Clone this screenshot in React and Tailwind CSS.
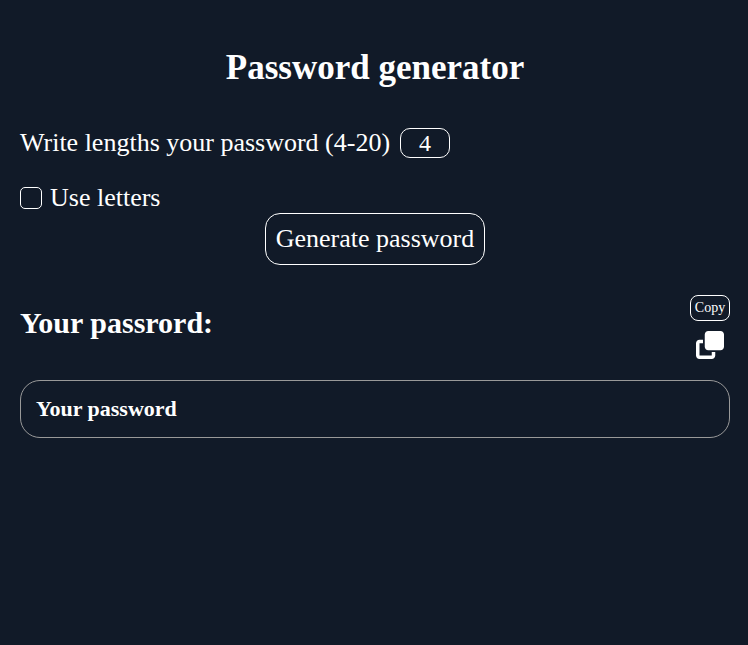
export default function App() {
  return (
    <div className="min-h-[645px] overflow-hidden bg-[#111a28] px-5 font-['Liberation_Serif','Times_New_Roman',serif] text-white">
      <h1 className="mt-[47px] pl-0.5 text-center text-[35px] leading-[42px] font-bold">Password generator</h1>
      <div className="mt-[39px] flex h-[30px] items-center text-[26px]">
        <span className="pb-0.5">Write lengths your password (4-20)</span>
        <div className="ml-[10px] h-[30px] w-[50px] rounded-[10px] border border-white text-center text-[24px] leading-7">4</div>
      </div>
      <label className="mt-[25px] flex h-[30px] items-center text-[26px]">
        <span className="mr-2 size-[22px] rounded-[5px] border border-white" />
        <span className="pb-0.5">Use letters</span>
      </label>
      <div className="ml-[245px] w-[220px]">
        <button className="h-[52px] w-[220px] rounded-[15px] border border-white text-[26px] leading-[50px] whitespace-nowrap">Generate password</button>
      </div>
      <div className="mt-[30px] -mr-[2px] flex justify-between">
        <h2 className="mt-[11px] text-[30px] leading-[34px] font-bold">Your passrord:</h2>
        <div className="flex w-10 flex-col items-center">
          <button className="h-[26px] w-10 rounded-[8px] border border-white text-[14px] leading-6">Copy</button>
          <svg className="mt-[10px] size-7" viewBox="0 0 512 512" fill="white">
            <path d="M224 0h224c35.300 0 64 28.700 64 64v224c0 35.300-28.700 64-64 64H224c-35.300 0-64-28.700-64-64V64c0-35.300 28.700-64 64-64ZM64 160h64v64H64v224h224v-64h64v64c0 35.300-28.700 64-64 64H64c-35.300 0-64-28.700-64-64V224c0-35.300 28.700-64 64-64Z" />
          </svg>
        </div>
      </div>
      <div className="mt-[21px] -mr-[2px] h-[58px] rounded-[20px] border border-[#999999] px-[15px] text-[22px] leading-[56px] font-bold">Your password</div>
    </div>
  );
}
